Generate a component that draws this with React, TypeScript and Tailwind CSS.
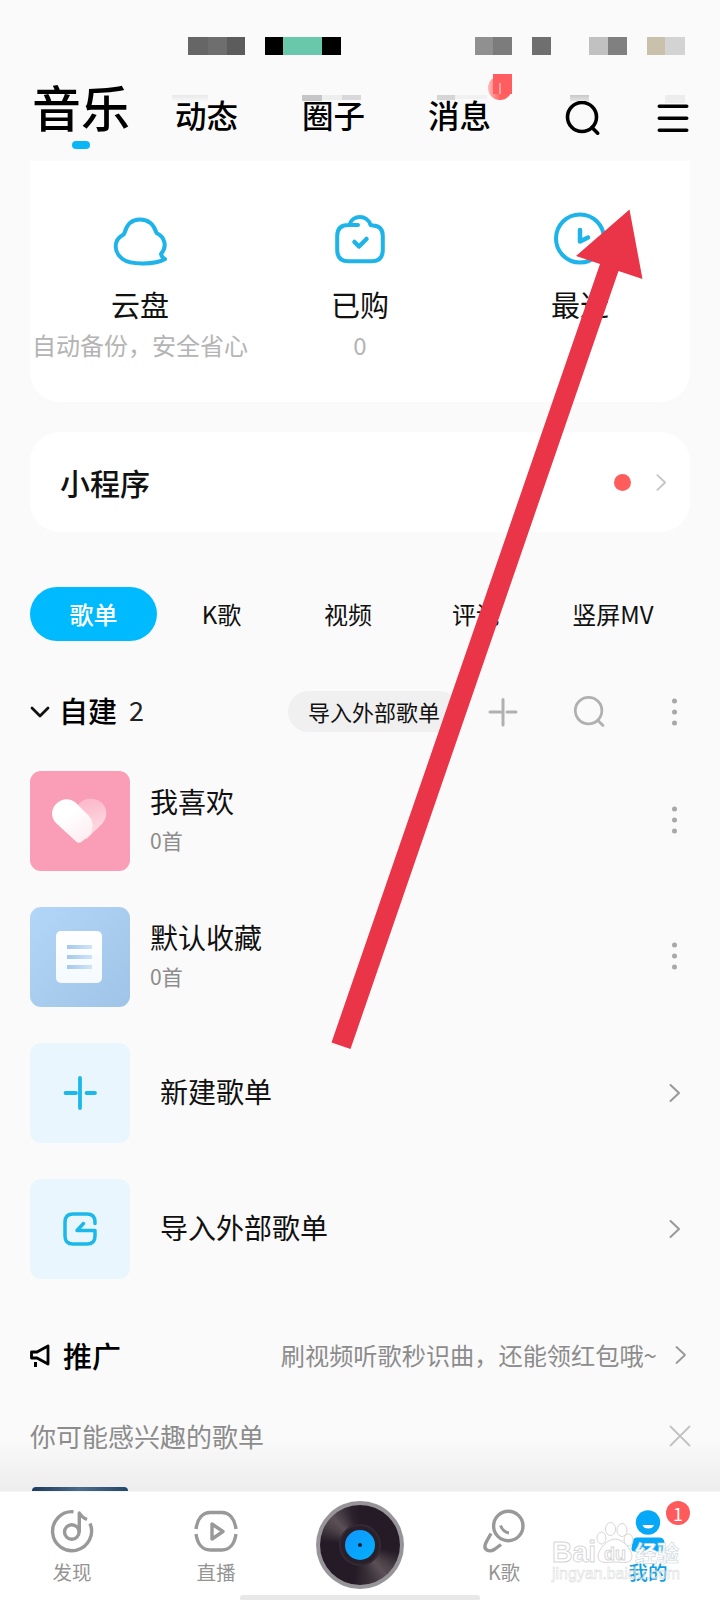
import type { ReactNode } from 'react'
import clsx from 'clsx'

interface IconProps {
  className?: string
}

const statusBlocks = [
  { width: 20, color: '#666666', gap: 188 },
  { width: 19, color: '#6e6e6e', gap: 0 },
  { width: 18, color: '#5c5c5c', gap: 0 },
  { width: 18, color: '#000000', gap: 20 },
  { width: 39, color: '#6ac8aa', gap: 0 },
  { width: 19, color: '#000000', gap: 0 },
  { width: 18, color: '#909090', gap: 134 },
  { width: 19, color: '#7c7c7c', gap: 0 },
  { width: 19, color: '#6f6f6f', gap: 20 },
  { width: 19, color: '#c1c1c1', gap: 38 },
  { width: 19, color: '#808080', gap: 0 },
  { width: 18, color: '#c9c1ab', gap: 20 },
  { width: 20, color: '#d3d3d3', gap: 0 },
]

function SearchIcon({ className }: IconProps) {
  return (
    <svg viewBox="0 0 36 36" className={className} fill="none" stroke="currentColor" strokeLinecap="round">
      <circle cx="17" cy="17" r="14.5" />
      <path d="M27 27.500l5.700 5.700" />
    </svg>
  )
}

function ChevronIcon({ className }: IconProps) {
  return (
    <svg viewBox="0 0 12 20" className={className} fill="none" stroke="currentColor" strokeLinecap="round" strokeLinejoin="round">
      <path d="M1.5 2l8.5 8-8.5 8" />
    </svg>
  )
}

function MoreIcon() {
  return (
    <svg viewBox="0 0 6 30" className="h-[30px] w-[6px] shrink-0 fill-[#a8a8a8]">
      <circle cx="2.5" cy="4" r="2.5" />
      <circle cx="2.5" cy="15" r="2.5" />
      <circle cx="2.5" cy="26" r="2.5" />
    </svg>
  )
}

function StatusBar() {
  return (
    <div className="flex h-[55px] items-end">
      {statusBlocks.map((block, i) => (
        <div
          key={i}
          className="h-[18px] shrink-0"
          style={{ width: block.width, marginLeft: block.gap, backgroundColor: block.color }}
        />
      ))}
    </div>
  )
}

function Header() {
  return (
    <header className="relative flex h-[106px] shrink-0 text-black">
      <div className="ml-[32px] w-[98px] pt-[26px]">
        <h1 className="text-[49px] leading-[50px] font-medium whitespace-nowrap">音乐</h1>
        <div className="mt-[10px] ml-[40px] h-[8px] w-[18px] rounded-[4px] bg-[#0bb6f7]" />
      </div>
      <nav className="flex text-[31.5px] leading-[40px] font-medium whitespace-nowrap">
        <span className="mt-[39px] ml-[45px] w-[127px]">动态</span>
        <span className="mt-[39px] w-[126px]">圈子</span>
        <span className="relative mt-[39px] w-[137px]">消息</span>
      </nav>
      <SearchIcon className="mt-[45px] h-[36px] w-[36px] stroke-[3.6]" />
      <svg viewBox="0 0 32 30" className="mt-[48px] ml-[56px] h-[30px] w-[32px]" stroke="currentColor" strokeWidth="3.6" strokeLinecap="round">
        <path d="M2.3 3.2h27.4M2.3 15.2h27.4M2.3 27.2h27.4" />
      </svg>

      {/* unread badge and the soft smudges above the tabs */}
      <div className="absolute top-[19px] left-[488px] h-[26px] w-[24px]">
        <div className="absolute top-[2px] left-0 h-[24px] w-[24px] rounded-full bg-linear-to-r from-[#ffb9b9] to-[#ff6161] to-50%" />
        <div className="absolute top-0 left-[5px] h-[20px] w-[19px] bg-[#ff5d5f]" />
        <div className="absolute top-[9px] left-[11px] h-[11px] w-[2px] bg-[#ffa0a0]" />
      </div>
      <div className="absolute top-[40px] left-[172px] h-[7px] w-[36px] bg-linear-to-b from-[#e8e8e8] to-[#fafafa]" />
      <div className="absolute top-[40px] left-[302px] h-[6px] w-[20px] bg-[#c6c6c6]" />
      <div className="absolute top-[40px] left-[322px] h-[5px] w-[20px] bg-[#eeeeee]" />
      <div className="absolute top-[40px] left-[342px] h-[5px] w-[19px] bg-[#d9d9d9]" />
      <div className="absolute top-[40px] left-[437px] h-[5px] w-[18px] bg-[#d5d5d5]" />
      <div className="absolute top-[40px] left-[455px] h-[4px] w-[32px] bg-[#f1f1f1]" />
      <div className="absolute top-[40px] left-[570px] h-[6px] w-[19px] bg-linear-to-b from-[#c8c8c8] to-[#e4e4e4]" />
      <div className="absolute top-[40px] left-[665px] h-[8px] w-[20px] bg-[#ededed]" />
    </header>
  )
}

interface ShortcutProps {
  icon: ReactNode
  label: string
  hint?: string
}

function Shortcut({ icon, label, hint }: ShortcutProps) {
  return (
    <div className="flex w-[220px] flex-col items-center pt-[47px] whitespace-nowrap">
      <svg viewBox="0 0 60 60" className="h-[60px] w-[60px]" fill="none" stroke="#1eb4ea" strokeWidth="4" strokeLinecap="round" strokeLinejoin="round">
        {icon}
      </svg>
      <p className="mt-[19px] text-[29px] leading-[34px] text-[#111111]">{label}</p>
      {hint && <p className="mt-[9px] text-[24px] leading-[30px] text-[#b4b4b4]">{hint}</p>}
    </div>
  )
}

function Shortcuts() {
  return (
    <section className="mx-[30px] flex h-[241px] shrink-0 rounded-b-[30px] bg-white">
      <Shortcut
        label="云盘"
        hint="自动备份，安全省心"
        icon={<path d="M14.500 25C17 15.500 23 11.500 30 11.500S43.500 15.500 46.500 25C55 29 57.500 38.500 51 46C51.500 48 53 50 55 51C46 56.500 21 57.500 12.500 51C3.500 44 3.500 32.500 12 27.500Q14 26.500 14.500 25Z" />}
      />
      <Shortcut
        label="已购"
        hint="0"
        icon={
          <>
            <path d="M28 17H18.500Q7.200 17 7.200 28V42Q7.200 53.300 18.500 53.300H41.500Q52.800 53.300 52.800 42V28Q52.800 18 43 17.500L40.500 17C37.500 6.500 22.500 6.500 19.500 16.500" />
            <path d="M24.500 34l4.500 4.500 7.500-7.500" strokeWidth="4.500" />
          </>
        }
      />
      <Shortcut
        label="最近"
        icon={
          <>
            <circle cx="30" cy="30.500" r="24" />
            <path d="M30 22v11.500l8-4" strokeWidth="4.500" />
          </>
        }
      />
    </section>
  )
}

function MiniPrograms() {
  return (
    <section className="mx-[30px] mt-[30px] flex h-[100px] shrink-0 items-center rounded-[30px] bg-white pr-[23px] pl-[30px]">
      <h2 className="text-[30px] leading-[40px] font-medium text-[#111111]">小程序</h2>
      <span className="ml-auto h-[17px] w-[17px] rounded-full bg-[#ff5c5c]" />
      <ChevronIcon className="ml-[25px] h-[19px] w-[11px] stroke-[2] text-[#c4c4c4]" />
    </section>
  )
}

const tabs = [
  { name: '歌单', style: 'w-[127px]' },
  { name: 'K歌', style: 'w-[129px]' },
  { name: '视频', style: 'w-[124px]' },
  { name: '评论', style: 'w-[132px]' },
  { name: '竖屏MV', style: 'w-[142px]' },
]

function Tabs() {
  return (
    <nav className="mt-[55px] flex h-[54px] shrink-0 pl-[30px]">
      {tabs.map((tab, i) => (
        <div
          key={tab.name}
          className={clsx(
            'flex items-center justify-center rounded-full text-[24px] leading-[30px]',
            tab.style,
            i === 0 ? 'bg-[#00baff] font-medium text-white' : 'text-[#111111]',
          )}
        >
          {tab.name}
        </div>
      ))}
    </nav>
  )
}

function SectionBar() {
  return (
    <div className="mt-[50px] flex h-[41px] shrink-0 items-center pl-[30px]">
      <svg viewBox="0 0 20 12" className="h-[12px] w-[20px]" fill="none" stroke="#111111" strokeWidth="2.8" strokeLinecap="round" strokeLinejoin="round">
        <path d="M2 2l8 8 8-8" />
      </svg>
      <h2 className="ml-[9px] w-[70px] pb-[3px] text-[29px] leading-[36px] font-medium text-black">自建</h2>
      <span className="w-[159px] pb-[3px] text-[27px] leading-[36px] text-[#222222]">2</span>
      <button className="h-[41px] w-[172px] rounded-full bg-[#f0f0f0] pb-[2px] text-[22px] leading-[38px] whitespace-nowrap text-[#111111]">
        导入外部歌单
      </button>
      <svg viewBox="0 0 30 30" className="ml-[28px] h-[30px] w-[30px]" stroke="#b0b0b0" strokeWidth="3" strokeLinecap="round">
        <path d="M15 2.500v25.500M2 15h10.500M19 15h9" />
      </svg>
      <SearchIcon className="ml-[55px] h-[33px] w-[33px] stroke-[3] text-[#b0b0b0]" />
      <div className="ml-[66px]">
        <MoreIcon />
      </div>
    </div>
  )
}

function HeartCover() {
  return (
    <svg viewBox="0 0 100 100" className="h-[100px] w-[100px] rounded-[11px] bg-[#fa9db6]">
      <defs>
        <linearGradient id="heart-left" x1="0.200" y1="0" x2="0.900" y2="1">
          <stop offset="0.350" stopColor="#ffffff" />
          <stop offset="1" stopColor="#fdeaf0" />
        </linearGradient>
        <linearGradient id="heart-right" x1="0.400" y1="0" x2="0.600" y2="1">
          <stop offset="0.100" stopColor="#fcbccd" />
          <stop offset="0.700" stopColor="#fdd6e0" />
        </linearGradient>
      </defs>
      <path d="M46 37C51 27 64 25 72 32C78 38 77.500 47 72 53L56 68.500Z" fill="url(#heart-right)" />
      <path d="M26 33C32 26.500 41 27 46 32L59 45Q65 51 61 63L52 70.500Q49 73 46 70.500L26 52C21 47 20.500 39 26 33Z" fill="url(#heart-left)" />
    </svg>
  )
}

function ListCover() {
  return (
    <div className="flex h-[100px] w-[100px] items-center justify-center rounded-[11px] bg-linear-to-br from-[#b2d6f7] to-[#a0c4e7]">
      <div className="mr-[2px] flex h-[52px] w-[46px] flex-col gap-[6px] rounded-[5px] bg-linear-to-b from-white to-[#f4faff] pt-[14px] pl-[11px]">
        <div className="h-[4px] w-[25px] bg-linear-to-r from-[#a4c9ea] to-[#d0e5f9]" />
        <div className="h-[4px] w-[25px] bg-linear-to-r from-[#a4c9ea] to-[#d0e5f9]" />
        <div className="h-[4px] w-[25px] bg-linear-to-r from-[#a4c9ea] to-[#d0e5f9]" />
      </div>
    </div>
  )
}

function PlaylistRow({ cover, title, count }: { cover: ReactNode; title: string; count: string }) {
  return (
    <li className="flex h-[100px] items-center">
      {cover}
      <div className="ml-[20px] flex-1">
        <p className="text-[28px] leading-[38px] text-[#111111]">{title}</p>
        <p className="text-[21px] leading-[40px] text-[#8c8c8c]">{count}</p>
      </div>
      <div className="mr-[12px] pb-[2px]">
        <MoreIcon />
      </div>
    </li>
  )
}

function ActionRow({ icon, title }: { icon: ReactNode; title: string }) {
  return (
    <li className="flex h-[100px] items-center">
      <div className="flex h-[100px] w-[100px] items-center justify-center rounded-[11px] bg-[#e9f6fe]">
        <svg viewBox="0 0 36 36" className="h-[36px] w-[36px]" fill="none" stroke="#1cb8e9" strokeWidth="3.800" strokeLinecap="round" strokeLinejoin="round">
          {icon}
        </svg>
      </div>
      <p className="ml-[30px] flex-1 pb-[4px] text-[28px] leading-[38px] text-[#111111]">{title}</p>
      <ChevronIcon className="mr-[9px] h-[20px] w-[12px] stroke-[2] text-[#999999]" />
    </li>
  )
}

function Playlists() {
  return (
    <ul className="mt-[39px] flex shrink-0 flex-col gap-[36px] px-[30px]">
      <PlaylistRow cover={<HeartCover />} title="我喜欢" count="0首" />
      <PlaylistRow cover={<ListCover />} title="默认收藏" count="0首" />
      <ActionRow title="新建歌单" icon={<path d="M18 3v30M3.500 18H14M24.500 18H33" />} />
      <ActionRow
        title="导入外部歌单"
        icon={
          <path d="M33 12.500V11Q33 3 25 3H11Q3 3 3 11V25Q3 33 11 33H25Q33 33 33 25V19.500H15L21.500 12.500" strokeWidth="3.500" />
        }
      />
    </ul>
  )
}

function Promotion() {
  return (
    <div className="mt-[56px] flex h-[40px] shrink-0 items-center pr-[33px] pl-[29px]">
      <svg viewBox="0 0 22 26" className="h-[26px] w-[22px]" fill="none" stroke="#000000" strokeWidth="2.800" strokeLinejoin="round">
        <path d="M19 4L8 10H2.500V16H8L19 22Z" />
        <path d="M6.500 20V25" strokeWidth="3" />
      </svg>
      <h2 className="ml-[12px] text-[29px] leading-[36px] font-medium text-black">推广</h2>
      <p className="ml-auto text-[24.200px] leading-[30px] whitespace-nowrap text-[#8c8c8c]">
        刷视频听歌秒识曲，还能领红包哦~
      </p>
      <ChevronIcon className="ml-[18px] h-[20px] w-[12px] stroke-[1.800] text-[#999999]" />
    </div>
  )
}

function Suggestions() {
  return (
    <section className="flex h-[116px] shrink-0 flex-col px-[30px]">
      <div className="mt-[42px] flex h-[38px] items-center">
        <p className="flex-1 text-[26px] leading-[36px] text-[#8c8c8c]">你可能感兴趣的歌单</p>
        <svg viewBox="0 0 22 22" className="mr-[-1px] h-[22px] w-[22px]" stroke="#c2c2c2" strokeWidth="1.800" strokeLinecap="round">
          <path d="M1.500 1.500l19 19M20.500 1.500l-19 19" />
        </svg>
      </div>
      <div className="mt-auto ml-[2px] h-[4px] w-[96px] rounded-t-[8px] bg-linear-to-r from-[#1e3a5c] via-[#4d6b8c] to-[#24466c]" />
    </section>
  )
}

function Vinyl() {
  return (
    <div className="flex h-[88px] w-[88px] items-center justify-center rounded-full bg-[#98959a]">
      <div className="flex h-[80px] w-[80px] items-center justify-center rounded-full bg-[conic-gradient(#241b27_0deg,#241b27_100deg,#4a4046_125deg,#5a5055_140deg,#3a3038_165deg,#241b27_190deg,#241b27_275deg,#4a4046_300deg,#5a5055_315deg,#2c222e_345deg,#241b27_360deg)]">
        <div className="flex h-[42px] w-[42px] items-center justify-center rounded-full border-2 border-[#332a33] bg-[#2a202b]">
          <div className="flex h-[30px] w-[30px] items-center justify-center rounded-full bg-linear-to-br from-[#1196ff] to-[#04b0fb]">
            <div className="h-[4px] w-[4px] rounded-full bg-[#14202e]" />
          </div>
        </div>
      </div>
    </div>
  )
}

function NavItem({ label, active, children }: { label: string; active?: boolean; children: ReactNode }) {
  return (
    <div className={clsx('flex w-[144px] flex-col items-center pt-[17px]', active ? 'text-[#0b9fe4]' : 'text-[#949494]')}>
      <svg viewBox="0 0 46 46" className="h-[46px] w-[46px]" fill="none" stroke="#999999" strokeWidth="3.400" strokeLinecap="butt" strokeLinejoin="round">
        {children}
      </svg>
      <span className={clsx('mt-[4px] text-[19.500px] leading-[26px]', active ? 'font-medium' : 'font-normal')}>{label}</span>
    </div>
  )
}

function Watermark() {
  return (
    <div className="pointer-events-none absolute top-[29px] left-[552px] h-[64px] w-[140px]">
      <svg viewBox="0 0 140 64" className="h-[64px] w-[140px] overflow-visible" fill="#ffffff" stroke="#d6d6d6" strokeWidth="1" fontFamily="'Liberation Sans', 'Noto Sans CJK SC', sans-serif">
        <ellipse cx="49.500" cy="17" rx="4.500" ry="6" />
        <ellipse cx="58.500" cy="8" rx="5" ry="6.500" />
        <ellipse cx="70" cy="9" rx="5" ry="6.500" />
        <ellipse cx="76.500" cy="19" rx="4.500" ry="6" />
        <path d="M63 18C55 18 46 29 46 35C46 44 56 41 63 41C70 41 80 44 80 35C80 29 71 18 63 18Z" />
        <text x="0" y="41" fontSize="29" fontWeight="bold" textLength="44" lengthAdjust="spacingAndGlyphs">Bai</text>
        <text x="52" y="39" fontSize="19" fontWeight="bold" textLength="22" lengthAdjust="spacingAndGlyphs">du</text>
        <text x="83" y="40" fontSize="22" fontWeight="bold" stroke="#cfd9df" strokeWidth="0.700">经验</text>
        <text x="0" y="58" fontSize="17" textLength="128" lengthAdjust="spacingAndGlyphs" strokeWidth="0.500" fillOpacity="0.400">jingyan.baidu.com</text>
      </svg>
    </div>
  )
}

function BottomNav() {
  return (
    <footer className="relative flex h-[109px] shrink-0 overflow-hidden border-t border-[#f4f4f4] bg-white">
      <NavItem label="发现">
        <path d="M24.500 2.700A19.500 19.500 0 1 0 41 14.500" />
        <circle cx="22.800" cy="23" r="7.300" />
        <path d="M30.300 23V4Q33 8.500 38 10.500" />
      </NavItem>
      <NavItem label="直播">
        <path d="M3 20C4.500 9 10 3.500 17 3.500H29C36 3.500 41.500 9 43 20M3 25C4.500 35.500 10 41 17 41H29C36 41 41.500 35.500 43 25" />
        <path d="M19 15v15l11-7.500z" />
      </NavItem>
      <div className="flex w-[144px] justify-center pt-[9px]">
        <Vinyl />
      </div>
      <NavItem label="K歌">
        <circle cx="27.300" cy="17" r="14.700" />
        <path d="M10 24.500L5 33.500C1.500 41 8 44 14 40L20 35.500" />
        <path d="M19.500 16.500Q22 23 28 24" strokeWidth="3" />
      </NavItem>
      <NavItem label="我的" active>
        <circle cx="23" cy="13.500" r="12.200" fill="#08a8f8" stroke="none" />
        <path d="M17.500 16h11.500a6 5 0 0 1-11.500 0z" fill="#ffffff" stroke="none" />
        <path d="M12 28.500h22q5 0 5.500 5v6q0 3-3 3h-27q-3 0-3-3l1-6q.5-5 4.500-5z" fill="#08a8f8" stroke="none" />
      </NavItem>
      <Watermark />
      <span className="absolute top-[9px] left-[666px] h-[24px] w-[24px] rounded-full bg-[#ff5a5c] text-center text-[18px] leading-[24px] text-white">
        1
      </span>
      <div className="absolute bottom-[-1px] left-[240px] h-[6px] w-[240px] rounded-[3px] bg-[#e8e8e8]" />
    </footer>
  )
}

export default function App() {
  return (
    <div className="relative flex h-[1600px] w-[720px] flex-col overflow-hidden bg-[#fafafa] font-['Noto_Sans_CJK_SC',sans-serif]">
      <StatusBar />
      <Header />
      <Shortcuts />
      <MiniPrograms />
      <Tabs />
      <SectionBar />
      <Playlists />
      <Promotion />
      <div className="bg-linear-to-b from-[#fafafa] from-55% to-[#ededed]">
        <Suggestions />
      </div>
      <BottomNav />

      {/* arrow pointing at the menu button */}
      <svg viewBox="0 0 720 1600" className="pointer-events-none absolute inset-0 h-[1600px] w-[720px]">
        <path d="M629.500 209.500L576 256l24 8L331.500 1042.500l19 6.500L618.500 271l24 8z" fill="#ea3548" />
      </svg>
    </div>
  )
}
